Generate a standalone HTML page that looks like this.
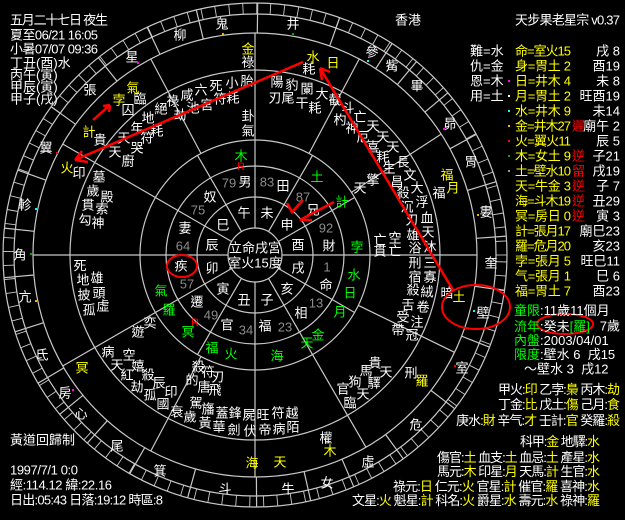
<!DOCTYPE html>
<html><head><meta charset="utf-8"><style>
html,body{margin:0;padding:0;background:#000;width:625px;height:520px;overflow:hidden}
svg{display:block}
text{font-family:"Liberation Sans","WenQuanYi Zen Hei","Noto Sans CJK TC",sans-serif;font-size:13px}
.c{text-anchor:middle;dominant-baseline:central}
.w{fill:#fff}.y{fill:#ff0}.g{fill:#0f0}.r{fill:#f00}.n{fill:#8c8c8c}
.l{dominant-baseline:central}
</style></head><body>
<svg id="s" width="625" height="520" viewBox="0 0 625 520">
<g fill="none" stroke="#c8c8c8" stroke-width="1.2">
<circle cx="255" cy="255" r="252"/>
<circle cx="255" cy="255" r="241"/>
<circle cx="255" cy="255" r="222"/>
<circle cx="255" cy="255" r="185"/>
<circle cx="255" cy="255" r="115"/>
<circle cx="255" cy="255" r="89"/>
<circle cx="255" cy="255" r="58"/>
<circle cx="255" cy="255" r="27"/>
<g id="lines"></g>
</g>
<g class="c">
<text x="222" y="24" class="w">鬼</text><text x="293" y="24" class="w">井</text><text x="372" y="52" class="w">參</text><text x="392" y="66" class="w">觜</text><text x="417" y="86" class="w">畢</text><text x="450" y="124" class="w">昴</text><text x="471" y="162" class="w">胃</text><text x="486" y="212" class="w">婁</text><text x="491" y="263" class="w">奎</text><text x="483" y="313" class="w">壁</text><text x="462" y="368" class="w">室</text><text x="416" y="425" class="w">危</text><text x="368" y="462" class="w">虛</text><text x="327" y="483" class="w">女</text><text x="288" y="489" class="w">牛</text><text x="225" y="489" class="w">斗</text><text x="160" y="471" class="w">箕</text><text x="117" y="446" class="w">尾</text><text x="81" y="414" class="w">心</text><text x="65" y="393" class="w">房</text><text x="42" y="355" class="w">氐</text><text x="25" y="297" class="w">亢</text><text x="20" y="255" class="w">角</text><text x="25" y="205" class="w">軫</text><text x="46" y="148" class="w">翼</text><text x="90" y="90" class="w">張</text><text x="132" y="57" class="w">星</text><text x="180" y="35" class="w">柳</text>
<text x="133" y="88" class="y">氣</text><text x="119" y="100" class="y">孛</text><text x="140" y="99" class="w">臨</text><text x="128" y="110" class="w">囚</text><text x="89" y="132" class="y">計</text><text x="100" y="140" class="w">貴</text><text x="161" y="109" class="w">絕</text><text x="148" y="118" class="w">地</text><text x="137" y="128" class="w">年</text><text x="157" y="131" class="w">耗</text><text x="124" y="138" class="w">天</text><text x="147" y="138" class="w">符</text><text x="137" y="148" class="w">哭</text><text x="115" y="152" class="w">天</text><text x="128" y="161" class="w">廚</text>
<text x="173" y="101" class="w">祿</text><text x="180" y="115" class="w">劫</text><text x="187" y="95" class="w">咸</text><text x="193" y="108" class="w">池</text><text x="201" y="90" class="w">六</text><text x="207" y="105" class="w">宮</text><text x="216" y="86" class="w">死</text><text x="220" y="99" class="w">符</text><text x="232" y="83" class="w">小</text><text x="233" y="98" class="w">耗</text><text x="247" y="81" class="w">胎</text><text x="248" y="116" class="w">卦</text><text x="248" y="131" class="w">氣</text>
<text x="248" y="49" class="y">金</text><text x="248" y="62" class="w">祿</text><text x="313" y="57" class="y">水</text><text x="309" y="69" class="w">耗</text><text x="333" y="63" class="y">日</text>
<text x="277" y="82" class="w">陽</text><text x="275" y="98" class="w">刃</text><text x="292" y="85" class="w">豹</text><text x="288" y="98" class="w">尾</text><text x="307" y="89" class="w">闌</text><text x="302" y="103" class="w">干</text><text x="322" y="94" class="w">大</text><text x="315" y="108" class="w">耗</text><text x="335" y="100" class="w">截</text>
<text x="348" y="108" class="w">斗</text><text x="340" y="120" class="w">杓</text><text x="360" y="117" class="w">亡</text><text x="352" y="128" class="w">神</text><text x="373" y="126" class="w">天</text><text x="363" y="137" class="w">厄</text><text x="383" y="137" class="w">天</text><text x="373" y="147" class="w">喜</text><text x="393" y="147" class="w">天</text><text x="383" y="157" class="w">耗</text><text x="403" y="162" class="w">長</text><text x="389" y="168" class="w">生</text><text x="410" y="175" class="w">文</text><text x="397" y="182" class="w">昌</text><text x="417" y="188" class="w">大</text><text x="403" y="193" class="w">殺</text><text x="422" y="202" class="w">浮</text><text x="407" y="207" class="w">沉</text><text x="427" y="218" class="w">血</text><text x="412" y="220" class="w">刃</text><text x="428" y="232" class="w">天</text><text x="413" y="235" class="w">雄</text><text x="430" y="247" class="w">沐</text><text x="415" y="248" class="w">浴</text><text x="430" y="263" class="w">三</text><text x="415" y="263" class="w">刑</text><text x="430" y="277" class="w">寡</text><text x="415" y="277" class="w">宿</text><text x="427" y="292" class="w">絨</text><text x="413" y="290" class="w">殺</text><text x="423" y="307" class="w">卷</text><text x="408" y="305" class="w">舌</text><text x="417" y="322" class="w">注</text><text x="403" y="317" class="w">受</text><text x="412" y="335" class="w">冠</text><text x="398" y="330" class="w">帶</text>
<text x="447" y="293" class="w">暗</text><text x="459" y="297" class="y">土</text>
<text x="360" y="188" class="w">天</text><text x="373" y="180" class="w">擎</text><text x="380" y="240" class="w">亡</text><text x="395" y="238" class="w">空</text><text x="380" y="251" class="w">貫</text><text x="395" y="251" class="w">亡</text>
<text x="447" y="175" class="y">福</text><text x="439" y="193" class="w">福</text><text x="453" y="188" class="y">月</text>
<text x="357" y="247" class="g">孛</text><text x="342" y="202" class="g">計</text><text x="317" y="177" class="g">土</text><text x="354" y="275" class="g">水</text><text x="350" y="293" class="g">日</text><text x="340" y="312" class="g">月</text><text x="318" y="335" class="g">金</text><text x="307" y="343" class="g">天</text><text x="277" y="356" class="g">海</text><text x="231" y="354" class="g">火</text><text x="212" y="348" class="g">福</text><text x="188" y="332" class="g">冥</text><text x="195" y="323" class="r" style="font-size:11px">R</text><text x="169" y="310" class="g">羅</text><text x="161" y="291" class="g">氣</text><text x="241" y="156" class="g">木</text><text x="241" y="167" class="r" style="font-size:11px">R</text>
<text x="67" y="168" class="y">火</text><text x="79" y="173" class="w">印</text><text x="99" y="177" class="w">墓</text><text x="93" y="191" class="w">歲</text><text x="107" y="197" class="w">殿</text><text x="88" y="205" class="w">貫</text><text x="102" y="209" class="w">索</text><text x="85" y="220" class="w">勾</text><text x="98" y="223" class="w">神</text>
<text x="80" y="266" class="w">死</text><text x="83" y="280" class="w">地</text><text x="97" y="278" class="w">雄</text><text x="84" y="295" class="w">披</text><text x="99" y="293" class="w">頭</text><text x="89" y="310" class="w">孤</text><text x="103" y="306" class="w">虛</text>
<text x="150" y="323" class="w">奕</text><text x="138" y="332" class="w">遊</text><text x="108" y="352" class="w">病</text><text x="129" y="355" class="w">空</text><text x="117" y="365" class="w">天</text><text x="138" y="366" class="w">嬉</text><text x="127" y="375" class="w">紅</text><text x="148" y="375" class="w">殺</text><text x="137" y="387" class="w">劫</text><text x="159" y="383" class="w">辰</text><text x="150" y="395" class="w">孤</text><text x="171" y="392" class="w">印</text><text x="163" y="404" class="w">國</text>
<text x="82" y="368" class="y">冥</text>
<text x="198" y="367" class="w">殺</text><text x="208" y="372" class="w">符</text><text x="218" y="377" class="w">刃</text><text x="192" y="380" class="w">的</text><text x="204" y="387" class="w">唐</text><text x="215" y="390" class="w">飛</text>
<text x="177" y="412" class="w">衰</text><text x="190" y="417" class="w">歲</text><text x="196" y="403" class="w">駕</text><text x="208" y="409" class="w">旛</text><text x="205" y="423" class="w">黃</text><text x="222" y="413" class="w">蓋</text><text x="219" y="427" class="w">華</text><text x="235" y="413" class="w">鋒</text><text x="234" y="430" class="w">劍</text><text x="249" y="415" class="w">屍</text><text x="250" y="431" class="w">伏</text><text x="263" y="415" class="w">旺</text><text x="265" y="430" class="w">帝</text><text x="278" y="413" class="w">符</text><text x="279" y="429" class="w">病</text><text x="292" y="413" class="w">越</text><text x="293" y="427" class="w">陌</text>
<text x="375" y="363" class="w">貴</text><text x="386" y="372" class="w">天</text><text x="366" y="371" class="w">馬</text><text x="374" y="383" class="w">驛</text><text x="355" y="382" class="w">狗</text><text x="363" y="394" class="w">天</text><text x="343" y="389" class="w">官</text><text x="350" y="403" class="w">臨</text>
<text x="411" y="373" class="w">刑</text><text x="422" y="381" class="y">羅</text>
<text x="326" y="438" class="w">權</text><text x="330" y="451" class="y">木</text><text x="280" y="462" class="y">天</text><text x="252" y="463" class="y">海</text>
<text x="245" y="182" class="w">男</text><text x="283" y="186" class="w">田</text><text x="313" y="210" class="w">兄</text><text x="329" y="246" class="w">財</text><text x="326" y="285" class="w">命</text><text x="301" y="313" class="w">相</text><text x="265" y="326" class="w">福</text><text x="227" y="325" class="w">官</text><text x="197" y="302" class="w">遷</text><text x="181" y="266" class="w">疾</text><text x="185" y="228" class="w">妻</text><text x="210" y="197" class="w">奴</text>
<text x="229" y="183" class="n">79</text><text x="267" y="182" class="n">83</text><text x="303" y="197" class="n">87</text><text x="326" y="228" class="n">92</text><text x="327" y="267" class="n">1</text><text x="316" y="303" class="n">13</text><text x="285" y="327" class="n">23</text><text x="246" y="330" class="n">34</text><text x="211" y="315" class="n">49</text><text x="187" y="284" class="n">57</text><text x="183" y="246" class="n">64</text><text x="198" y="210" class="n">75</text>
<text x="244" y="213" class="w">午</text><text x="267" y="213" class="w">未</text><text x="287" y="225" class="w">申</text><text x="298" y="245" class="w">酉</text><text x="298" y="268" class="w">戌</text><text x="287" y="289" class="w">亥</text><text x="267" y="300" class="w">子</text><text x="244" y="300" class="w">丑</text><text x="223" y="289" class="w">寅</text><text x="212" y="268" class="w">卯</text><text x="212" y="245" class="w">辰</text><text x="223" y="225" class="w">巳</text>
<text x="255" y="248" class="w">立命戌宮</text><text x="255" y="263" class="w">室火15度</text>
</g>
<g>
<rect x="137" y="62" width="2" height="2" fill="#f0f"/><rect x="222" y="33" width="2" height="2" fill="#fa0"/><rect x="292" y="33" width="2" height="2" fill="#0a0"/><rect x="367" y="60" width="2" height="2" fill="#0ff"/><rect x="443" y="128" width="2" height="2" fill="#f0f"/><rect x="477" y="214" width="2" height="2" fill="#fa0"/><rect x="473" y="310" width="2" height="2" fill="#0ff"/><rect x="454" y="365" width="2" height="2" fill="#f00"/><rect x="35" y="300" width="2" height="2" fill="#fa0"/><rect x="35" y="208" width="2" height="2" fill="#0ff"/><rect x="30" y="253" width="2" height="2" fill="#0a0"/><rect x="72" y="389" width="2" height="2" fill="#f0f"/><rect x="56" y="152" width="2" height="2" fill="#f00"/>
</g>
<g fill="none" stroke="#f00" stroke-width="2.5">
<path d="M303 62 L75 160 M75 160 L82 151 M75 160 L88 162"/>
<path d="M453 290 L320 68 M320 68 L322 80 M320 68 L330 72"/>
<path d="M93 120 L110 105 M110 105 L103 106 M110 105 L109 112"/>
<path d="M287 203 L292 212 L303 200"/>
<path d="M334 202 L300 220 L312 220"/>
<ellipse cx="182" cy="266" rx="15" ry="11" stroke-width="2"/>
<ellipse cx="476" cy="307" rx="34" ry="22" stroke-width="2"/>
<ellipse cx="565" cy="324" rx="28" ry="10" stroke-width="2"/>
</g>
<g class="l w">
<text x="10" y="20" textLength="98">五月二十七日 夜生</text>
<text x="10" y="35" textLength="88">夏至06/21 16:05</text>
<text x="10" y="49" textLength="88">小暑07/07 09:36</text>
<text x="10" y="63">丁丑(酉)水</text>
<text x="10" y="75">丙午(寅)</text>
<text x="10" y="87">甲辰(寅)</text>
<text x="10" y="99">甲子(戌)</text>
<text x="395" y="20">香港</text>
<text x="10" y="440">黃道回歸制</text>
<text x="10" y="470" textLength="68">1997/7/1 0:0</text>
<text x="10" y="485" textLength="102">經:114.12 緯:22.16</text>
<text x="10" y="500" textLength="153">日出:05:43 日落:19:12 時區:8</text>
</g>
<g class="l">
<text x="515" y="20" class="w" textLength="105">天步果老星宗 v0.37</text>
<text x="470" y="51" class="w">難=水</text><text x="470" y="66" class="w">仇=金</text><text x="470" y="81" class="w">恩=木</text><text x="470" y="96" class="w">用=土</text>
<g class="y">
<text x="515" y="51" textLength="56">命=室火15</text><text x="515" y="66" textLength="56">身=胃土 2</text><text x="515" y="81" textLength="56">日=井木 4</text><text x="515" y="96" textLength="56">月=胃土 2</text><text x="515" y="111" textLength="56">水=井木 9</text><text x="515" y="126" textLength="56">金=井木27</text><text x="515" y="141" textLength="56">火=翼火11</text><text x="515" y="156" textLength="56">木=女土 9</text><text x="515" y="171" textLength="56">土=壁水10</text><text x="515" y="186" textLength="56">天=牛金 3</text><text x="515" y="201" textLength="56">海=斗木19</text><text x="515" y="216" textLength="56">冥=房日 0</text><text x="515" y="231" textLength="56">計=張月17</text><text x="515" y="246" textLength="56">羅=危月20</text><text x="515" y="261" textLength="56">孛=張月 5</text><text x="515" y="276" textLength="56">气=張月 1</text><text x="515" y="291" textLength="56">福=胃土 7</text>
</g>
<g class="r"><text x="572" y="126">遲</text><text x="572" y="156">逆</text><text x="572" y="171">留</text><text x="572" y="186">逆</text><text x="572" y="201">逆</text><text x="572" y="216">逆</text></g>
<g class="w" style="text-anchor:end">
<text x="620" y="51">戌 8</text><text x="620" y="66">酉19</text><text x="620" y="81">未 8</text><text x="620" y="96">旺酉19</text><text x="620" y="111">未14</text><text x="620" y="126">廟午 2</text><text x="620" y="141">辰 5</text><text x="620" y="156">子21</text><text x="620" y="171">戌19</text><text x="620" y="186">子 7</text><text x="620" y="201">丑29</text><text x="620" y="216">寅 3</text><text x="620" y="231">廟巳23</text><text x="620" y="246">亥23</text><text x="620" y="261">旺巳11</text><text x="620" y="276">巳 6</text><text x="620" y="291">酉23</text>
</g>
<rect x="508" y="80" width="2" height="2" fill="#f0f"/><rect x="508" y="95" width="2" height="2" fill="#fff"/><rect x="508" y="110" width="2" height="2" fill="#0ff"/><rect x="508" y="125" width="2" height="2" fill="#fa0"/><rect x="508" y="140" width="2" height="2" fill="#f00"/><rect x="508" y="155" width="2" height="2" fill="#0a0"/><rect x="508" y="170" width="2" height="2" fill="#999"/>
<text x="514" y="310"><tspan class="g">童限</tspan><tspan class="w">:11歲11個月</tspan></text>
<text x="514" y="326"><tspan class="g">流年</tspan><tspan class="w">:癸未</tspan><tspan class="g">[羅]</tspan></text><text x="620" y="326" class="w" style="text-anchor:end">7歲</text>
<text x="514" y="340"><tspan class="g">內盤</tspan><tspan class="w">:2003/04/01</tspan></text>
<text x="514" y="354"><tspan class="g">限度</tspan><tspan class="w">:壁水 6 &#160;戌15</tspan></text>
<text x="524" y="369" class="w">～壁水 3 &#160;戌12</text>
<text x="498" y="389" textLength="122"><tspan class="w">甲火:</tspan><tspan class="y">印</tspan><tspan class="w"> 乙孛:</tspan><tspan class="y">梟</tspan><tspan class="w"> 丙木:</tspan><tspan class="y">劫</tspan></text>
<text x="498" y="404" textLength="122"><tspan class="w">丁金:</tspan><tspan class="y">比</tspan><tspan class="w"> 戊土:</tspan><tspan class="y">傷</tspan><tspan class="w"> 己月:</tspan><tspan class="y">食</tspan></text>
<text x="456" y="420" textLength="164"><tspan class="w">庚水:</tspan><tspan class="y">財</tspan><tspan class="w"> 辛气:</tspan><tspan class="y">才</tspan><tspan class="w"> 壬計:</tspan><tspan class="y">官</tspan><tspan class="w"> 癸羅:</tspan><tspan class="y">殺</tspan></text>
<text x="520" y="441" textLength="80"><tspan class="w">科甲:</tspan><tspan class="y">金</tspan><tspan class="w"> 地驛:</tspan><tspan class="y">水</tspan></text>
<text x="437" y="457" textLength="163"><tspan class="w">傷官:</tspan><tspan class="y">土</tspan><tspan class="w"> 血支:</tspan><tspan class="y">土</tspan><tspan class="w"> 血忌:</tspan><tspan class="y">土</tspan><tspan class="w"> 產星:</tspan><tspan class="y">水</tspan></text>
<text x="437" y="471" textLength="163"><tspan class="w">馬元:</tspan><tspan class="y">木</tspan><tspan class="w"> 印星:</tspan><tspan class="y">月</tspan><tspan class="w"> 天馬:</tspan><tspan class="y">計</tspan><tspan class="w"> 生官:</tspan><tspan class="y">水</tspan></text>
<text x="393" y="486" textLength="207"><tspan class="w">祿元:</tspan><tspan class="y">日</tspan><tspan class="w"> 仁元:</tspan><tspan class="y">火</tspan><tspan class="w"> 官星:</tspan><tspan class="y">計</tspan><tspan class="w"> 催官:</tspan><tspan class="y">羅</tspan><tspan class="w"> 喜神:</tspan><tspan class="y">水</tspan></text>
<text x="352" y="500" textLength="248"><tspan class="w">文星:</tspan><tspan class="y">火</tspan><tspan class="w"> 魁星:</tspan><tspan class="y">計</tspan><tspan class="w"> 科名:</tspan><tspan class="y">火</tspan><tspan class="w"> 爵星:</tspan><tspan class="y">水</tspan><tspan class="w"> 壽元:</tspan><tspan class="y">水</tspan><tspan class="w"> 祿神:</tspan><tspan class="y">羅</tspan></text>
</g>
</svg>
<script>
(function(){
var g=document.getElementById('lines'),cx=255,cy=255,h='';
function ln(a,r1,r2,w){var t=a*Math.PI/180,c=Math.cos(t),s=-Math.sin(t);
h+='<line x1="'+(cx+c*r1).toFixed(1)+'" y1="'+(cy+s*r1).toFixed(1)+'" x2="'+(cx+c*r2).toFixed(1)+'" y2="'+(cy+s*r2).toFixed(1)+'"'+(w?' stroke-width="'+w+'"':'')+'/>';}
[0,90,180,270].forEach(function(a){ln(a,27,222);});
[30,60,120,150,210,240,300,330].forEach(function(a){ln(a,27,115);});
[33,62,118,150,210,242,300,334].forEach(function(a){ln(a,115,222);});
var m=[[222,24],[293,24],[372,52],[392,66],[417,86],[450,124],[471,162],[486,212],[491,263],[483,313],[462,368],[416,425],[368,462],[327,483],[288,489],[225,489],[160,471],[117,446],[81,414],[65,393],[42,355],[25,297],[20,255],[25,205],[46,148],[90,90],[132,57],[180,35]];
var an=m.map(function(p){var a=Math.atan2(-(p[1]-cy),p[0]-cx)*180/Math.PI;return a<0?a+360:a;});
for(var i=0;i<an.length;i++){var a=an[i],b=an[(i+1)%an.length];if(b>a)b-=360;ln((a+b)/2,222,252);}
for(var d=0;d<360;d+=3.2){ln(d,241,252,0.9);}
g.innerHTML=h;
})();
</script>
</body></html>
